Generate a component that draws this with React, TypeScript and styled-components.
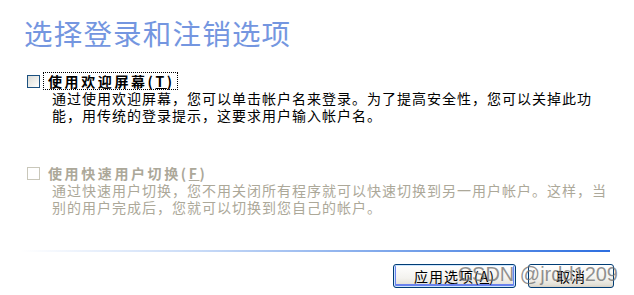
import React from 'react';
import styled, {createGlobalStyle} from 'styled-components';

const GlobalStyle = createGlobalStyle`
  html, body {
    margin: 0;
    padding: 0;
    background: #fff;
  }
  body {
    font-family: "Noto Sans CJK SC", "Liberation Sans", sans-serif;
  }
`;

const Page = styled.div`
  position: relative;
  width: 634px;
  height: 295px;
  box-sizing: border-box;
  padding: 16px 20px 0 24px;
  background: #fff;
  overflow: hidden;
`;

const Title = styled.h1`
  margin: 0;
  font-size: 28.5px;
  line-height: 34px;
  font-weight: normal;
  letter-spacing: 1.2px;
  color: #7496e0;
`;

const Option = styled.div<{ $top: number }>`
  margin-top: ${p => p.$top}px;
  padding-left: 3px;
`;

const OptionRow = styled.div`
  display: flex;
  align-items: center;
  height: 18px;
`;

const Box = styled.span<{ $disabled?: boolean }>`
  width: 13px;
  height: 13px;
  box-sizing: border-box;
  flex: none;
  border: 1px solid ${p => p.$disabled ? '#c9c7ba' : '#1c5180'};
  background: ${p => p.$disabled ? '#fff' : 'linear-gradient(135deg, #dcdcd7 0%, #f4f4f1 70%, #fff 100%)'};
`;

const Label = styled.span<{ $disabled?: boolean; $focus?: boolean }>`
  margin-left: 3px;
  padding: 0 2px 0 4px;
  font-size: 14px;
  line-height: 16px;
  font-weight: bold;
  letter-spacing: 2.6px;
  white-space: nowrap;
  color: ${p => p.$disabled ? '#aca899' : '#000'};
  border: 1px dotted ${p => p.$focus ? '#000' : 'transparent'};
  u {
    text-decoration-thickness: 1px;
  }
`;

const Desc = styled.p<{ $disabled?: boolean }>`
  margin: 0;
  padding-left: 25px;
  font-size: 14px;
  line-height: 17px;
  letter-spacing: 1px;
  white-space: nowrap;
  color: ${p => p.$disabled ? '#aca899' : '#000'};
`;

const Separator = styled.div`
  margin-top: 34px;
  margin-left: -4px;
  margin-right: 4px;
  height: 2px;
  background: linear-gradient(to right, #fff 0%, #c9dbf7 30%, #6d9be8 70%, #2d6ee0 100%);
`;

const Buttons = styled.div`
  display: flex;
  justify-content: flex-end;
  gap: 12px;
  margin-top: 12px;
`;

const Button = styled.button<{ $w: number; $default?: boolean }>`
  width: ${p => p.$w}px;
  height: 24px;
  padding: 0;
  border: 1px solid #003c74;
  border-radius: 3px;
  background: linear-gradient(#ffffff 0%, #f3f2ee 60%, #e3e0d6 90%, #d6d0c5 100%);
  box-shadow: ${p => p.$default
    ? 'inset 0 0 0 1px #cee7ff, inset 0 -1px 0 2px #6982ee'
    : 'none'};
  font-family: "Noto Sans CJK SC", "Liberation Sans", sans-serif;
  font-size: 14px;
  line-height: 20px;
  letter-spacing: 1px;
  color: #000;
  u {
    text-decoration-thickness: 1px;
  }
`;

const Watermark = styled.span`
  position: absolute;
  right: 16px;
  bottom: 9px;
  font-family: "Liberation Sans", sans-serif;
  font-size: 20px;
  color: rgba(110, 110, 110, 0.75);
  pointer-events: none;
`;

export default function App() {
  return (
    <Page>
      <GlobalStyle/>
      <Title>选择登录和注销选项</Title>

      <Option $top={22}>
        <OptionRow>
          <Box/>
          <Label $focus>使用欢迎屏幕(<u>T</u>)</Label>
        </OptionRow>
        <Desc>
          通过使用欢迎屏幕，您可以单击帐户名来登录。为了提高安全性，您可以关掉此功<br/>
          能，用传统的登录提示，这要求用户输入帐户名。
        </Desc>
      </Option>

      <Option $top={40}>
        <OptionRow>
          <Box $disabled/>
          <Label $disabled>使用快速用户切换(<u>F</u>)</Label>
        </OptionRow>
        <Desc $disabled>
          通过快速用户切换，您不用关闭所有程序就可以快速切换到另一用户帐户。这样，当<br/>
          别的用户完成后，您就可以切换到您自己的帐户。
        </Desc>
      </Option>

      <Separator/>

      <Buttons>
        <Button $w={123} $default>应用选项(<u>A</u>)</Button>
        <Button $w={86}>取消</Button>
      </Buttons>

      <Watermark>CSDN @jrdd1209</Watermark>
    </Page>
  );
}
